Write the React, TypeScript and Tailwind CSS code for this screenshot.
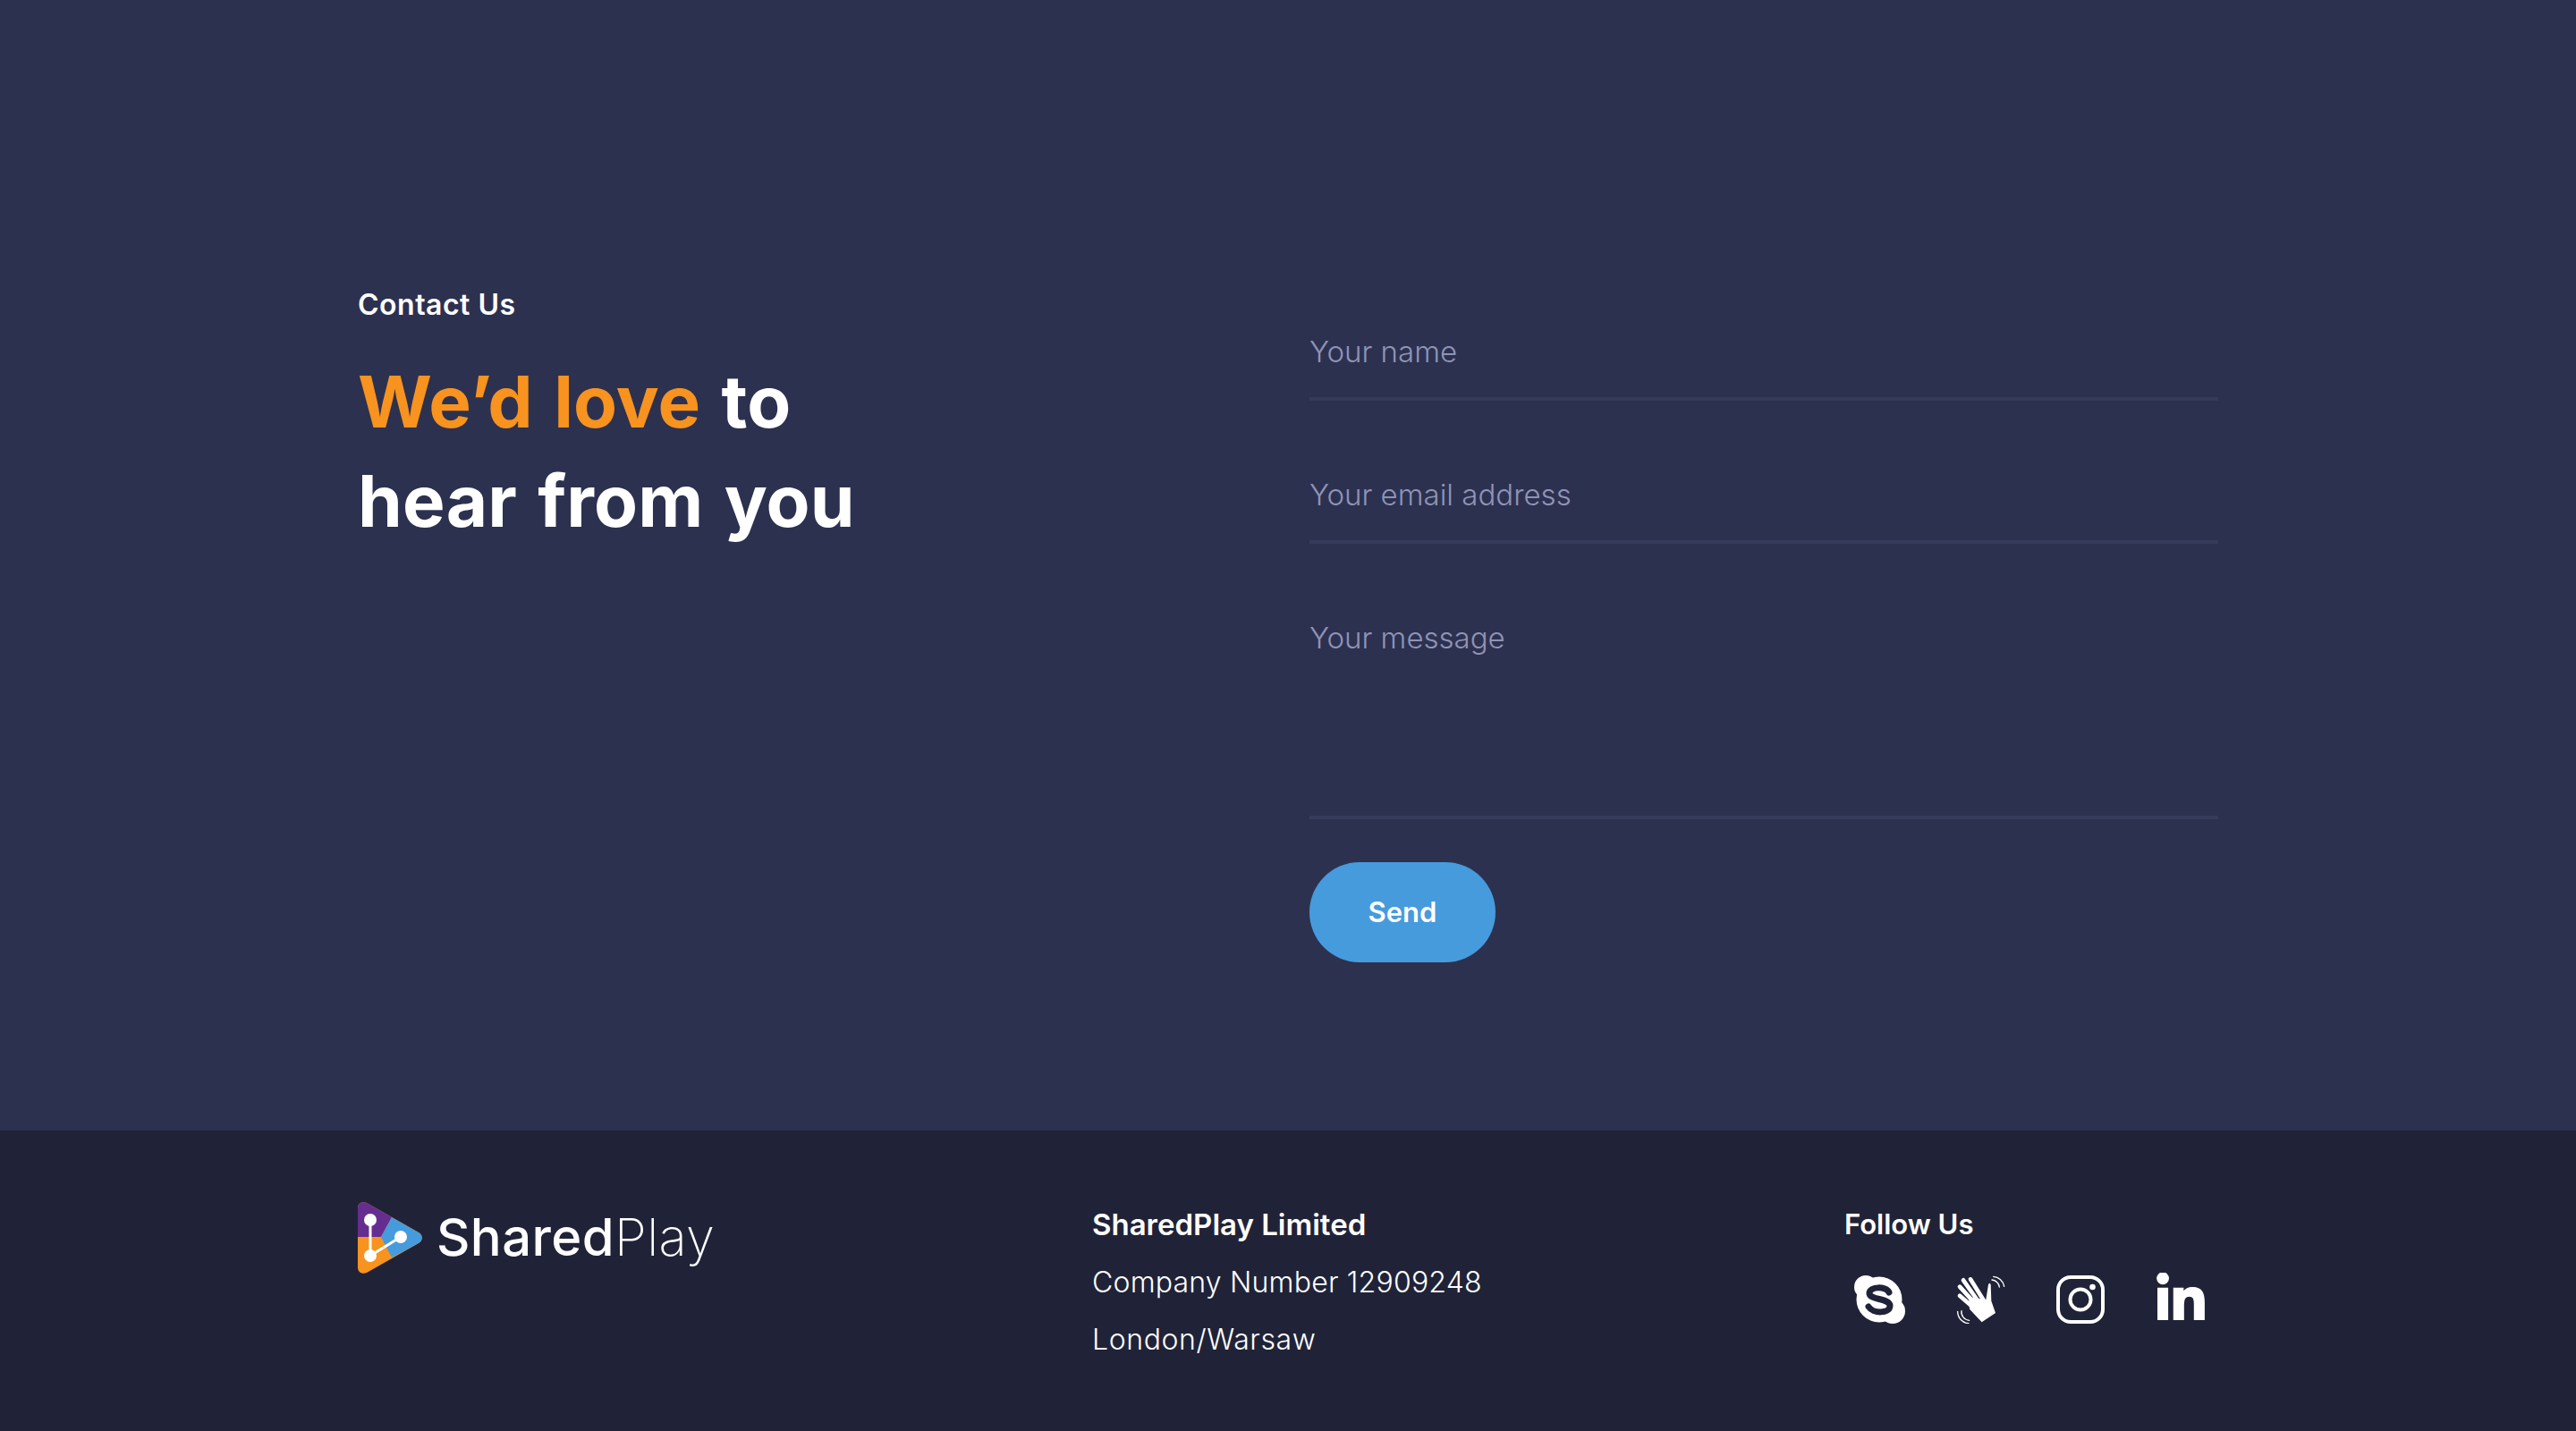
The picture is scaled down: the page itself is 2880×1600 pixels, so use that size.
import { FaLinkedinIn } from "react-icons/fa";

const font = { fontFamily: "Inter, 'Liberation Sans', sans-serif" };

function Logo() {
  return (
    <svg width="72" height="80" viewBox="0 0 72 80" className="shrink-0">
      <defs>
        <clipPath id="tri">
          <path d="M0 7C0 1 5-1 10 1L68 34C73 37 73 43 68 46L10 79C5 81 0 79 0 73Z" />
        </clipPath>
      </defs>
      <g clipPath="url(#tri)">
        <rect width="72" height="80" fill="#f7931e" />
        <path d="M0 0H40L38 17L26 39H0Z" fill="#662d91" />
        <path d="M38 17L72 36V44L38 62L26 39Z" fill="#469bdc" />
      </g>
      <path d="M14 20V60L48 39" fill="none" stroke="#fff" strokeWidth="3" />
      <circle cx="14" cy="20" r="7" fill="#fff" />
      <circle cx="48" cy="39" r="7" fill="#fff" />
      <circle cx="14" cy="60" r="7" fill="#fff" />
    </svg>
  );
}

function SkypeIcon() {
  return (
    <svg width="58" height="54" viewBox="0 0 58 54" className="ml-[9px] shrink-0">
      <circle cx="29" cy="27" r="25.500" fill="#fff" />
      <circle cx="14" cy="13" r="13" fill="#fff" />
      <circle cx="44" cy="40" r="14" fill="#fff" />
      <path
        d="M40 19C37 12 18 12 18 20C18 28 41 25 41 34C41 43 22 43 17 35"
        fill="none"
        stroke="#202338"
        strokeWidth="7"
        strokeLinecap="round"
      />
    </svg>
  );
}

function WaveIcon() {
  return (
    <svg width="55" height="54" viewBox="0 0 165 160" className="ml-[57px] shrink-0">
      <g stroke="#fff" strokeWidth="14" strokeLinecap="round">
        <path d="M48 12L92 82" />
        <path d="M24 15L74 86" />
        <path d="M12 37L62 92" />
        <path d="M12 67L52 102" />
      </g>
      <path d="M42 72L100 80L108 30Q112 20 116 30L118 85L132 125L86 156L45 112Z" fill="#fff" />
      <g fill="none" stroke="#fff" strokeWidth="4" strokeLinecap="round">
        <path d="M120 14A28 28 0 0 1 145 38" />
        <path d="M125 3A40 40 0 0 1 161 36" />
        <path d="M18 118A28 28 0 0 0 44 150" />
        <path d="M5 120A40 40 0 0 0 42 160" />
      </g>
    </svg>
  );
}

function InstagramIcon() {
  return (
    <svg width="54" height="54" viewBox="0 0 54 54" fill="none" stroke="#fff" strokeWidth="4" className="ml-[57px] shrink-0">
      <rect x="2" y="2" width="50" height="50" rx="14" />
      <circle cx="27" cy="27" r="11.500" />
      <circle cx="40.500" cy="13" r="3.300" fill="#fff" stroke="none" />
    </svg>
  );
}

export default function App() {
  const fieldClasses =
    "w-full bg-transparent border-b-4 border-[#373b5b] text-[33px] font-light text-white outline-none placeholder:text-[#8f94b5]";

  return (
    <div className="flex flex-col h-[1600px] w-full text-white" style={font}>
      <main className="flex h-[1264px] bg-[#2d3150] px-[400px]">
        <section className="w-[1064px] shrink-0 pt-[319px]">
          <p className="text-[32px] leading-[44px] font-semibold tracking-[0.5px]">Contact Us</p>
          <h1 className="mt-[30px] text-[80px] leading-[111px] font-bold tracking-[0.2px] [word-spacing:4px]">
            <span className="text-[#f7931e]">We’d love</span> to
            <br />
            hear from you
          </h1>
        </section>

        <form className="w-[1016px] pt-[360px]">
          <input
            className={`${fieldClasses} h-[88px] pb-[18px]`}
            placeholder="Your name"
          />
          <input
            className={`${fieldClasses} h-[88px] pb-[18px] mt-[72px]`}
            placeholder="Your email address"
          />
          <textarea
            className={`${fieldClasses} block h-[236px] resize-none mt-[72px] pt-[9px]`}
            placeholder="Your message"
          />
          <button
            type="button"
            className="mt-[48px] flex h-[112px] w-[208px] items-center justify-center rounded-full bg-[#469bdc] text-[31px] font-semibold"
          >
            Send
          </button>
        </form>
      </main>

      <footer className="flex flex-1 bg-[#202338] px-[400px]">
        <div className="flex w-[821px] shrink-0 items-start gap-[16px] pt-[80px]">
          <Logo />
          <p className="mt-[5px] text-[58px] leading-[68px] tracking-[0.4px]">
            <span className="font-medium">Shared</span>
            <span className="font-extralight">Play</span>
          </p>
        </div>

        <div className="w-[841px] shrink-0 pt-[73px] text-[32px] leading-[64px] font-light tracking-[0.2px]">
          <p className="text-[33px] font-semibold tracking-normal">SharedPlay Limited</p>
          <p className="mt-px">Company Number 12909248</p>
          <p className="tracking-[0.6px]">London/Warsaw</p>
        </div>

        <div className="pt-[73px]">
          <p className="text-[31px] leading-[64px] font-semibold">Follow Us</p>
          <div className="ml-px mt-[22px] flex items-center">
            <SkypeIcon />
            <WaveIcon />
            <InstagramIcon />
            <FaLinkedinIn className="ml-[55px] h-[60px] w-[60px] shrink-0 stroke-white stroke-[10]" />
          </div>
        </div>
      </footer>
    </div>
  );
}
